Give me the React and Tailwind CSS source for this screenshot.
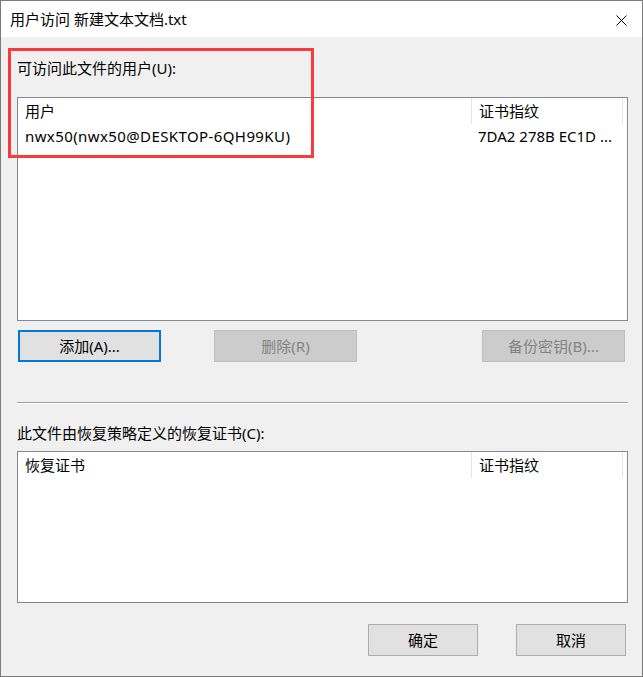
import React from "react";

const font = "font-['Noto_Sans','Noto_Sans_CJK_SC',sans-serif]";

const ListBox = ({ col1, col2, rows = [], height }) => (
  <div className={`flex flex-col border border-[#828790] bg-white ${height}`}>
    <div className="flex h-[26px] items-center">
      <div className="flex h-full w-[454px] items-center border-r border-[#e5e5e5] pl-[7px]">
        {col1}
      </div>
      <div className="flex h-full w-[151px] items-center border-r border-[#e5e5e5] pl-[7px]">
        {col2}
      </div>
    </div>
    {rows.map((r, i) => (
      <div key={i} className="flex h-[24px] items-center">
        <div className="w-[454px] truncate pl-[7px] tracking-[0.4px]">{r[0]}</div>
        <div className="w-[151px] truncate pl-[6px]">{r[1]}</div>
      </div>
    ))}
  </div>
);

const Button = ({ children, width = "w-[143px]", disabled, focused, className = "" }) => (
  <button
    className={`flex h-[32px] items-center justify-center ${width} ${className} ${
      focused
        ? "border-2 border-[#0078d7] bg-[#e1e1e1] text-black"
        : disabled
        ? "border border-[#bfbfbf] bg-[#cccccc] text-[#838383]"
        : "border border-[#adadad] bg-[#e1e1e1] text-black"
    }`}
  >
    {children}
  </button>
);

export default function App() {
  return (
    <div
      className={`relative flex h-[677px] w-[643px] flex-col border border-[#7a7a7a] bg-[#f0f0f0] text-[15px] leading-[20px] text-black ${font}`}
    >
      {/* Title bar */}
      <div className="flex h-[36px] items-center justify-between bg-white pl-[9px] pr-[15px]">
        <span>用户访问 新建文本文档.txt</span>
        <svg width="11" height="11" viewBox="0 0 11 11" className="mb-[-2px]">
          <path d="M0.5 0.5 L10.5 10.5 M10.5 0.5 L0.5 10.5" stroke="#000" strokeWidth="1" />
        </svg>
      </div>

      {/* Content */}
      <div className="flex flex-col pl-[16px] pr-[14px]">
        <div className="mt-[21px]">可访问此文件的用户(U):</div>
        <div className="mt-[19px]">
          <ListBox
            col1="用户"
            col2="证书指纹"
            rows={[["nwx50(nwx50@DESKTOP-6QH99KU)", "7DA2 278B EC1D ..."]]}
            height="h-[224px]"
          />
        </div>

        <div className="mt-[9px] flex">
          <Button focused className="ml-[1px]">添加(A)...</Button>
          <Button disabled className="ml-[53px]">删除(R)</Button>
          <Button disabled className="ml-auto mr-[3px]">备份密钥(B)...</Button>
        </div>

        <div className="mt-[40px] h-[2px] border-t border-[#a0a0a0] border-b border-b-white" />

        <div className="mt-[19px]">此文件由恢复策略定义的恢复证书(C):</div>
        <div className="mt-[8px]">
          <ListBox col1="恢复证书" col2="证书指纹" height="h-[152px]" />
        </div>

        <div className="mt-[21px] flex justify-end gap-[38px] pr-[2px]">
          <Button width="w-[110px]">确定</Button>
          <Button width="w-[110px]">取消</Button>
        </div>
      </div>

      {/* Red highlight overlay */}
      <div className="pointer-events-none absolute left-[7px] top-[47px] h-[110px] w-[306px] border-[3px] border-[#fa3a3f]" />
    </div>
  );
}
